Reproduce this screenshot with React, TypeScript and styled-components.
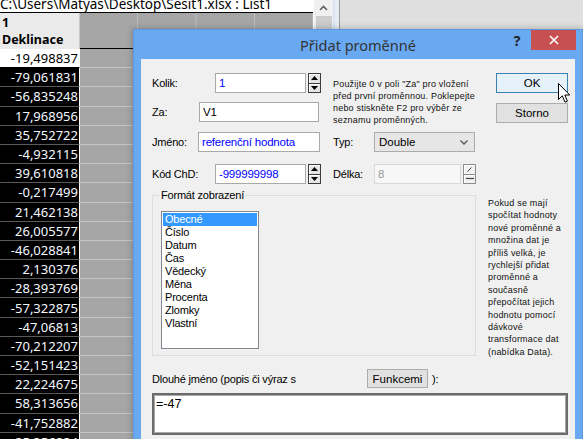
import React from "react";
import styled, { createGlobalStyle } from "styled-components";

const GlobalStyle = createGlobalStyle`
  html, body {
    margin: 0;
    padding: 0;
  }
  body {
    background: #dfdfdf;
    overflow: hidden;
  }
  * {
    box-sizing: border-box;
  }
`;

const values = [
  "-19,498837",
  "-79,061831",
  "-56,835248",
  "17,968956",
  "35,752722",
  "-4,932115",
  "39,610818",
  "-0,217499",
  "21,462138",
  "26,005577",
  "-46,028841",
  "2,130376",
  "-28,393769",
  "-57,322875",
  "-47,06813",
  "-70,212207",
  "-52,151423",
  "22,224675",
  "58,313656",
  "-41,752882",
  "25,356224",
];

const formats = ["Obecné", "Číslo", "Datum", "Čas", "Vědecký", "Měna", "Procenta", "Zlomky", "Vlastní"];

const hintLines = [
  'Použijte 0 v poli "Za" pro vložení',
  "před první proměnnou. Poklepejte",
  "nebo stiskněte F2 pro výběr ze",
  "seznamu proměnných.",
];

const noteLines = [
  "Pokud se mají",
  "spočítat hodnoty",
  "nové proměnné a",
  "množina dat je",
  "příliš velká, je",
  "rychlejší přidat",
  "proměnné a",
  "současně",
  "přepočítat jejich",
  "hodnotu pomocí",
  "dávkové",
  "transformace dat",
  "(nabídka Data).",
];

const Screen = styled.div`
  position: relative;
  width: 583px;
  height: 439px;
  overflow: hidden;
  display: flex;
  background: #dfdfdf;
`;

/* ---------- spreadsheet behind the dialog ---------- */

const SheetWindow = styled.div`
  display: flex;
  width: 340px;
  height: 100%;
`;

const SheetPane = styled.div`
  width: 313px;
  height: 100%;
  overflow: hidden;
  display: flex;
  flex-direction: column;
  background: #a6a6a6;
  font-family: "Noto Sans", sans-serif;
`;

const PathBar = styled.div`
  flex-shrink: 0;
  height: 13px;
  background: #fff;
  border-bottom: 1px solid #000;
  overflow: hidden;
  white-space: nowrap;
  color: #000;
  font-size: 13.5px;
  line-height: 18px;

  span {
    display: block;
    margin-top: -5px;
  }
`;

const HeaderRow = styled.div`
  flex-shrink: 0;
  display: flex;
  height: 36px;
`;

const HeaderCell = styled.div`
  width: 80px;
  background: #eaeaea;
  border-right: 1px solid #c8c8c8;
  padding: 1px 0 0 2px;
  font-weight: 700;
  font-size: 12.5px;
  line-height: 17px;
  color: #000;
`;

const GridFill = styled.div<{ $edge: string }>`
  flex: 1;
  background-image: linear-gradient(to right, #bdbdbd 1px, transparent 1px);
  background-size: 58.5px 100%;
  background-position: 57px 0;
  border-bottom: 1px solid ${(p) => p.$edge};
`;

const DataRow = styled.div`
  display: flex;
  height: 19.2px;
  flex-shrink: 0;
`;

const ValueCell = styled.div<{ $active?: boolean }>`
  width: 80px;
  display: flex;
  align-items: center;
  justify-content: flex-end;
  padding-right: 1px;
  background: ${(p) => (p.$active ? "#fff" : "#000")};
  color: ${(p) => (p.$active ? "#000" : "#f4f8ff")};
  border-right: 1px solid #fff;
  border-bottom: 1px solid ${(p) => (p.$active ? "#000" : "#5a5a5a")};
  font-size: 13px;
`;

const ScrollBar = styled.div`
  width: 20px;
  background: #f0f0f0;
  border-left: 1px solid #fff;
  display: flex;
  flex-direction: column;
  align-items: center;
`;

const ArrowSlot = styled.div`
  height: 16px;
  display: flex;
  align-items: center;
  justify-content: center;
`;

const Thumb = styled.div`
  width: 16px;
  height: 60px;
  background: #cdcdcd;
`;

const WindowEdge = styled.div`
  width: 7px;
  background: #e8edf4;
  border-left: 2px solid #d6e4f4;
  border-right: 1px solid #9c9c9c;
`;

const Desktop = styled.div`
  flex: 1;
  background: #dfdfdf;
`;

/* ---------- dialog ---------- */

const Dialog = styled.div`
  position: absolute;
  left: 133px;
  top: 29px;
  width: 450px;
  height: 420px;
  display: flex;
  flex-direction: column;
  padding: 0 7px;
  background: #69a9f2;
  border: 1px solid #5a98e0;
  box-shadow: 0 0 7px rgba(0, 0, 0, 0.28);
  font-family: "Liberation Sans", Arial, sans-serif;
  font-size: 11px;
  color: #000;
`;

const TitleBar = styled.div`
  position: relative;
  height: 29px;
  display: flex;
  align-items: center;
  justify-content: center;
`;

const Title = styled.div`
  font-family: "Noto Sans", sans-serif;
  font-size: 14.5px;
  color: #333;
  padding-top: 1px;
`;

const CaptionButtons = styled.div`
  position: absolute;
  right: -7px;
  top: 0;
  display: flex;
  align-items: flex-start;
`;

const HelpGlyph = styled.div`
  width: 30px;
  height: 20px;
  font-family: "Noto Sans", sans-serif;
  font-weight: 700;
  font-size: 14px;
  line-height: 20px;
  text-align: center;
  color: #222;
  margin-right: -1px;
  padding-top: 1px;
`;

const CloseButton = styled.div`
  width: 45px;
  height: 20px;
  margin-right: 6px;
  background: #c75050;
  display: flex;
  align-items: center;
  justify-content: center;
`;

const Client = styled.div`
  flex: 1;
  background: #f0f0f0;
  padding: 14px 7px 0 11px;
  letter-spacing: -0.2px;
`;

const TopSection = styled.div`
  display: flex;
  align-items: flex-start;
`;

const Column = styled.div<{ $width: number; $gap?: number }>`
  width: ${(p) => p.$width}px;
  margin-left: ${(p) => p.$gap ?? 0}px;
  display: flex;
  flex-direction: column;
`;

const FieldRow = styled.div<{ $mt?: number }>`
  display: flex;
  align-items: center;
  height: 20px;
  margin-top: ${(p) => p.$mt ?? 0}px;
`;

const Label = styled.div<{ $width: number }>`
  width: ${(p) => p.$width}px;
  flex-shrink: 0;
  white-space: nowrap;
`;

const TextBox = styled.div<{ $width: number; $blue?: boolean; $disabled?: boolean }>`
  width: ${(p) => p.$width}px;
  height: 20px;
  padding: 0 3px;
  display: flex;
  align-items: center;
  white-space: nowrap;
  background: ${(p) => (p.$disabled ? "#f7f7f7" : "#fff")};
  border: 1px solid ${(p) => (p.$disabled ? "#d9d9d9" : "#a9a9a9")};
  color: ${(p) => (p.$disabled ? "#9a9a9a" : p.$blue ? "#0000ff" : "#000")};
  font-size: 11.5px;
`;

const Spin = styled.div`
  display: flex;
  flex-direction: column;
  width: 13px;
  height: 20px;
  margin-left: 2px;
`;

const SpinHalf = styled.div<{ $muted?: boolean }>`
  flex: 1;
  display: flex;
  align-items: center;
  justify-content: center;
  background: ${(p) => (p.$muted ? "#f2f2f2" : "#e4e4e4")};
  border: 1px solid ${(p) => (p.$muted ? "#8d8d8d" : "#3c3c3c")};
  box-shadow: inset 1px 1px 0 #fff;

  & + & {
    margin-top: -1px;
  }
`;

const Select = styled.div`
  width: 101px;
  height: 20px;
  padding: 0 6px 0 4px;
  display: flex;
  align-items: center;
  justify-content: space-between;
  background: #e6e6e6;
  border: 1px solid #acacac;
  font-size: 11.5px;
  letter-spacing: 0;
`;

const Hint = styled.div`
  padding-top: 5px;
  height: 59px;
  font-size: 9px;
  line-height: 12px;
  letter-spacing: 0.2px;
  color: #111;
  white-space: nowrap;

  span {
    display: block;
  }
`;

const PushButton = styled.div<{ $default?: boolean }>`
  height: 20px;
  display: flex;
  align-items: center;
  justify-content: center;
  background: ${(p) => (p.$default ? "#e5f1fb" : "#e1e1e1")};
  border: 1px solid ${(p) => (p.$default ? "#3c7fb1" : "#adadad")};
  font-size: 11.5px;
  letter-spacing: 0;

  & + & {
    margin-top: 10px;
  }
`;

const MiddleSection = styled.div`
  display: flex;
  align-items: flex-start;
  margin-top: 11px;
`;

const GroupBox = styled.div`
  position: relative;
  width: 324px;
  height: 161px;
  border: 1px solid #dcdcdc;
  padding: 15px 0 0 8px;
`;

const Legend = styled.div`
  position: absolute;
  left: 6px;
  top: -7px;
  padding: 0 2px;
  background: #f0f0f0;
  line-height: 13px;
`;

const ListBox = styled.div`
  width: 98px;
  height: 138px;
  padding: 1px;
  background: #fff;
  border: 1px solid #828790;
`;

const ListItem = styled.div<{ $selected?: boolean }>`
  height: 13px;
  line-height: 13px;
  padding-left: 2px;
  background: ${(p) => (p.$selected ? "#3399ff" : "transparent")};
  color: ${(p) => (p.$selected ? "#fff" : "#000")};
`;

const Note = styled.div`
  margin: 2px 0 0 12px;
  font-size: 9px;
  line-height: 12.4px;
  letter-spacing: 0.2px;
  color: #111;
  white-space: nowrap;

  span {
    display: block;
  }
`;

const LongNameRow = styled.div`
  display: flex;
  align-items: center;
  height: 19px;
  margin-top: 11px;
`;

const SmallButton = styled.div`
  width: 61px;
  height: 19px;
  display: flex;
  align-items: center;
  justify-content: center;
  background: #e1e1e1;
  border: 1px solid #adadad;
  font-size: 11.5px;
  letter-spacing: 0;
`;

const Trailer = styled.div`
  margin-left: 4px;
`;

const Memo = styled.div`
  width: 416px;
  height: 42px;
  margin-top: 5px;
  padding: 2px 2px;
  background: #fff;
  border: 2px solid #6b6b6b;
  box-shadow: inset 0 0 0 1px #a9a9a9;
  font-size: 12.5px;
  letter-spacing: 0;
`;

const Pointer = styled.svg`
  position: absolute;
  left: 558px;
  top: 83px;
`;

const UpTriangle = () => (
  <svg width="7" height="4" viewBox="0 0 7 4">
    <path d="M0 4 L3.5 0 L7 4 Z" fill="#000" />
  </svg>
);

const DownTriangle = () => (
  <svg width="7" height="4" viewBox="0 0 7 4">
    <path d="M0 0 L3.5 4 L7 0 Z" fill="#000" />
  </svg>
);

const SpinArrows = () => (
  <Spin>
    <SpinHalf>
      <UpTriangle />
    </SpinHalf>
    <SpinHalf>
      <DownTriangle />
    </SpinHalf>
  </Spin>
);

const MutedSpin = () => (
  <Spin>
    <SpinHalf $muted>
      <svg width="7" height="5" viewBox="0 0 7 5">
        <path d="M1.5 4.5 L5.5 0.5" stroke="#444" strokeWidth="1" />
      </svg>
    </SpinHalf>
    <SpinHalf $muted>
      <svg width="8" height="3" viewBox="0 0 8 3">
        <path d="M0 1.5 L8 1.5" stroke="#444" strokeWidth="1.2" />
      </svg>
    </SpinHalf>
  </Spin>
);

const App = () => {
  return (
    <Screen>
      <GlobalStyle />
      <SheetWindow>
        <SheetPane>
          <PathBar>
            <span>C:\Users\Matyas\Desktop\Sesit1.xlsx : List1</span>
          </PathBar>
          <HeaderRow>
            <HeaderCell>
              1
              <br />
              Deklinace
            </HeaderCell>
            <GridFill $edge="#000" />
          </HeaderRow>
          {values.map((v, i) => (
            <DataRow key={i}>
              <ValueCell $active={i === 0}>{v}</ValueCell>
              <GridFill $edge="#c6c6c6" />
            </DataRow>
          ))}
        </SheetPane>
        <ScrollBar>
          <ArrowSlot>
            <svg width="9" height="6" viewBox="0 0 9 6">
              <path d="M1 5 L4.5 1.5 L8 5" stroke="#606060" strokeWidth="1.6" fill="none" />
            </svg>
          </ArrowSlot>
          <Thumb />
        </ScrollBar>
        <WindowEdge />
      </SheetWindow>
      <Desktop />

      <Dialog>
        <TitleBar>
          <Title>Přidat proměnné</Title>
          <CaptionButtons>
            <HelpGlyph>?</HelpGlyph>
            <CloseButton>
              <svg width="10" height="10" viewBox="0 0 10 10">
                <path d="M1 1 L9 9 M9 1 L1 9" stroke="#fff" strokeWidth="1.6" />
              </svg>
            </CloseButton>
          </CaptionButtons>
        </TitleBar>

        <Client>
          <TopSection>
            <Column $width={169}>
              <FieldRow>
                <Label $width={63}>Kolik:</Label>
                <TextBox $width={92} $blue>
                  1
                </TextBox>
                <SpinArrows />
              </FieldRow>
              <FieldRow $mt={9}>
                <Label $width={47}>Za:</Label>
                <TextBox $width={120}>V1</TextBox>
              </FieldRow>
              <FieldRow $mt={10}>
                <Label $width={46}>Jméno:</Label>
                <TextBox $width={122} $blue>
                  referenční hodnota
                </TextBox>
              </FieldRow>
              <FieldRow $mt={12}>
                <Label $width={63}>Kód ChD:</Label>
                <TextBox $width={92} $blue>
                  -999999998
                </TextBox>
                <SpinArrows />
              </FieldRow>
            </Column>

            <Column $width={143} $gap={12}>
              <Hint>
                {hintLines.map((l) => (
                  <span key={l}>{l}</span>
                ))}
              </Hint>
              <FieldRow>
                <Label $width={41}>Typ:</Label>
                <Select>
                  Double
                  <svg width="8" height="5" viewBox="0 0 8 5">
                    <path d="M0.5 0.5 L4 4 L7.5 0.5" stroke="#555" strokeWidth="1.3" fill="none" />
                  </svg>
                </Select>
              </FieldRow>
              <FieldRow $mt={12}>
                <Label $width={41}>Délka:</Label>
                <TextBox $width={88} $disabled>
                  8
                </TextBox>
                <MutedSpin />
              </FieldRow>
            </Column>

            <Column $width={72} $gap={20}>
              <PushButton $default>OK</PushButton>
              <PushButton>Storno</PushButton>
            </Column>
          </TopSection>

          <MiddleSection>
            <GroupBox>
              <Legend>Formát zobrazení</Legend>
              <ListBox>
                {formats.map((f, i) => (
                  <ListItem key={f} $selected={i === 0}>
                    {f}
                  </ListItem>
                ))}
              </ListBox>
            </GroupBox>
            <Note>
              {noteLines.map((l) => (
                <span key={l}>{l}</span>
              ))}
            </Note>
          </MiddleSection>

          <LongNameRow>
            <Label $width={215}>Dlouhé jméno (popis či výraz s</Label>
            <SmallButton>Funkcemi</SmallButton>
            <Trailer>):</Trailer>
          </LongNameRow>
          <Memo>=-47</Memo>
        </Client>
      </Dialog>

      <Pointer width="13" height="21" viewBox="0 0 13 21">
        <path
          d="M0.5 0.5 L0.5 16.5 L4.3 12.8 L7 19.2 L9.4 18.2 L6.8 12 L11.8 12 Z"
          fill="#fff"
          stroke="#000"
          strokeWidth="1"
          strokeLinejoin="round"
        />
      </Pointer>
    </Screen>
  );
};

export default App;
